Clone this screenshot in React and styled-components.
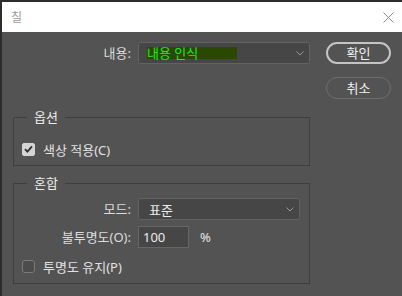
import React from 'react'
import styled, { createGlobalStyle } from 'styled-components'

const GlobalStyle = createGlobalStyle`
  html, body {
    margin: 0;
    padding: 0;
    background: #2c2c2c;
  }
  body {
    font-family: "Noto Sans", "Noto Sans CJK KR", sans-serif;
    font-size: 13px;
    color: #e2e2e2;
  }
`

const Frame = styled.div`
  width: 402px;
  height: 296px;
  padding: 2px 0 0 2px;
  box-sizing: border-box;
  background: #2c2c2c;
  overflow: hidden;
`

const Dialog = styled.div`
  height: 294px;
  background: #535353;
  display: flex;
  flex-direction: column;
`

const TitleBar = styled.div`
  height: 30px;
  flex: none;
  background: #ffffff;
  display: flex;
  align-items: center;
  justify-content: space-between;
  padding: 0 8px 0 9px;
`

const Title = styled.span`
  font-size: 12px;
  color: #9a9a9a;
`

const Body = styled.div`
  display: flex;
  gap: 16px;
  padding: 10px 0 0 11px;
`

const Main = styled.div`
  width: 297px;
  display: flex;
  flex-direction: column;
`

const Side = styled.div`
  width: 65px;
  display: flex;
  flex-direction: column;
  gap: 13px;
`

const Button = styled.button`
  height: 22px;
  box-sizing: border-box;
  border-radius: 11px;
  border: ${p => (p.$primary ? '2px solid #c4c4c4' : '1.5px solid #6e6e6e')};
  background: transparent;
  color: #f0f0f0;
  font-family: inherit;
  font-size: 13px;
  padding: 0;
  line-height: 18px;
`

const Row = styled.div`
  display: grid;
  grid-template-columns: ${p => p.$labelWidth}px auto;
  column-gap: 7px;
  align-items: center;
  margin-top: ${p => p.$top || 0}px;
`

const Label = styled.span`
  text-align: right;
  color: #dcdcdc;
  line-height: 18px;
`

const Select = styled.div`
  width: ${p => p.$width}px;
  height: 22px;
  box-sizing: border-box;
  border: 1px solid #626262;
  border-radius: 3px;
  background: #464646;
  display: flex;
  align-items: center;
  justify-content: space-between;
  padding: 0 5px 0 8px;
`

const Highlight = styled.span`
  display: inline-block;
  width: 90px;
  height: 12px;
  line-height: 12px;
  background: #2a4800;
  color: #22e822;
`

const SelectText = styled.span`
  padding-left: 2px;
  color: #ececec;
`

const InputRow = styled.div`
  display: flex;
  align-items: center;
  gap: 11px;
`

const NumberBox = styled.div`
  width: 51px;
  height: 22px;
  box-sizing: border-box;
  border: 1px solid #666666;
  background: #464646;
  padding-left: 4px;
  line-height: 20px;
  color: #ececec;
`

const Unit = styled.span`
  color: #e6e6e6;
`

const Group = styled.fieldset`
  margin: ${p => p.$top}px 0 0;
  padding: ${p => p.$padTop}px 8px ${p => p.$padBottom}px;
  border: 1px solid #3f3f3f;
  min-width: 0;
`

const Legend = styled.legend`
  margin-left: 5px;
  padding: 0 7px;
  line-height: 18px;
  color: #ececec;
`

const CheckRow = styled.label`
  display: flex;
  align-items: center;
  gap: 8px;
  height: 18px;
  margin-top: ${p => p.$top || 0}px;
`

const Box = styled.span`
  width: 13px;
  height: 13px;
  box-sizing: border-box;
  border-radius: ${p => (p.$checked ? 2 : 3)}px;
  background: ${p => (p.$checked ? '#d4d4d4' : '#4c4c4c')};
  border: 1px solid ${p => (p.$checked ? '#d4d4d4' : '#7a7a7a')};
  display: flex;
  align-items: center;
  justify-content: center;
`

const Chevron = () => (
  <svg width="8" height="5" viewBox="0 0 8 5">
    <path d="M0.5 0.5 L4 4 L7.5 0.5" fill="none" stroke="#9a9a9a" strokeWidth="1" />
  </svg>
)

const Checkbox = ({ checked }) => (
  <Box $checked={checked}>
    {checked && (
      <svg width="9" height="8" viewBox="0 0 9 8">
        <path d="M1 4.2 L3.4 6.6 L8 1.4" fill="none" stroke="#2e2e2e" strokeWidth="1.8" />
      </svg>
    )}
  </Box>
)

const CloseIcon = () => (
  <svg width="11" height="11" viewBox="0 0 11 11">
    <path d="M0.5 0.5 L10.5 10.5 M10.5 0.5 L0.5 10.5" stroke="#8a8a8a" strokeWidth="1" />
  </svg>
)

export default function App() {
  return (
    <>
      <GlobalStyle />
      <Frame>
        <Dialog>
          <TitleBar>
            <Title>칠</Title>
            <CloseIcon />
          </TitleBar>
          <Body>
            <Main>
              <Row $labelWidth={118}>
                <Label>내용:</Label>
                <Select $width={172}>
                  <Highlight>내용 인식</Highlight>
                  <Chevron />
                </Select>
              </Row>

              <Group $top={44} $padTop={14} $padBottom={7}>
                <Legend>옵션</Legend>
                <CheckRow>
                  <Checkbox checked />
                  <span>색상 적용(C)</span>
                </CheckRow>
              </Group>

              <Group $top={8} $padTop={6} $padBottom={8}>
                <Legend>혼합</Legend>
                <Row $labelWidth={109}>
                  <Label>모드:</Label>
                  <Select $width={162}>
                    <SelectText>표준</SelectText>
                    <Chevron />
                  </Select>
                </Row>
                <Row $labelWidth={109} $top={6}>
                  <Label>불투명도(O):</Label>
                  <InputRow>
                    <NumberBox>100</NumberBox>
                    <Unit>%</Unit>
                  </InputRow>
                </Row>
                <CheckRow $top={9}>
                  <Checkbox />
                  <span>투명도 유지(P)</span>
                </CheckRow>
              </Group>
            </Main>
            <Side>
              <Button $primary>확인</Button>
              <Button>취소</Button>
            </Side>
          </Body>
        </Dialog>
      </Frame>
    </>
  )
}
